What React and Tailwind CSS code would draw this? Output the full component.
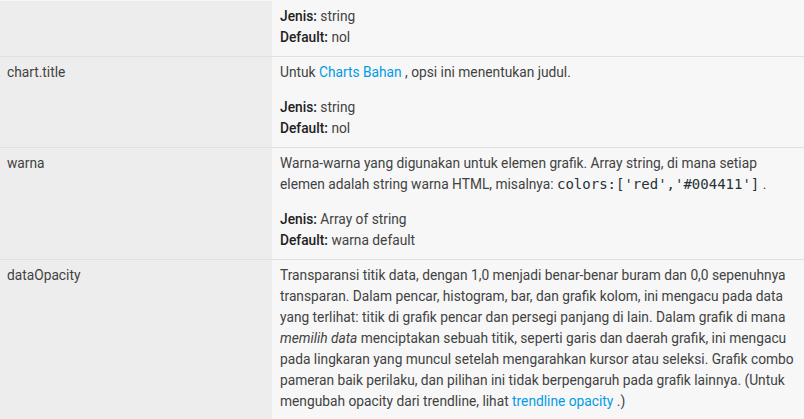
import React from "react";

const Link = ({ children }) => (
  <a className="text-[#039be5] no-underline">{children}</a>
);

const Code = ({ children }) => (
  <code className="font-['DejaVu_Sans_Mono',monospace] text-[14px] text-[#263238]">
    {children}
  </code>
);

const Meta = ({ type, def }) => (
  <p>
    <span className="font-medium text-[#212121]">Jenis:</span> {type}
    <br />
    <span className="font-medium text-[#212121]">Default:</span> {def}
  </p>
);

const rows = [
  {
    name: "",
    desc: null,
    type: "string",
    def: "nol",
  },
  {
    name: "chart.title",
    desc: (
      <>
        Untuk <Link>Charts Bahan</Link> , opsi ini menentukan judul.
      </>
    ),
    type: "string",
    def: "nol",
  },
  {
    name: "warna",
    desc: (
      <>
        Warna-warna yang digunakan untuk elemen grafik. Array string, di mana
        setiap elemen adalah string warna HTML, misalnya:{" "}
        <Code>colors:['red','#004411']</Code> .
      </>
    ),
    type: "Array of string",
    def: "warna default",
  },
  {
    name: "dataOpacity",
    desc: (
      <>
        Transparansi titik data, dengan 1,0 menjadi benar-benar buram dan 0,0
        sepenuhnya transparan. Dalam pencar, histogram, bar, dan grafik kolom,
        ini mengacu pada data yang terlihat: titik di grafik pencar dan persegi
        panjang di lain. Dalam grafik di mana <em>memilih data</em> menciptakan
        sebuah titik, seperti garis dan daerah grafik, ini mengacu pada
        lingkaran yang muncul setelah mengarahkan kursor atau seleksi. Grafik
        combo pameran baik perilaku, dan pilihan ini tidak berpengaruh pada
        grafik lainnya. (Untuk mengubah opacity dari trendline, lihat{" "}
        <Link>trendline opacity</Link> .)
      </>
    ),
    last: true,
  },
];

export default function App() {
  return (
    <div className="w-[804px] h-[419px] overflow-hidden bg-[#f7f7f7] font-['Roboto',sans-serif] text-[13.75px] leading-[21px] text-[#424242]">
      <div className="mt-[1px]">
        {rows.map((r, i) => (
          <div
            key={i}
            className={`flex ${r.last ? "" : "border-b border-[#e0e0e0]"}`}
          >
            <div className="w-[272px] shrink-0 bg-[#ededed] pl-[7px] pr-2 pt-[5px] pb-[8px]">
              {r.name}
            </div>
            <div className="flex-1 pl-2 pr-[2px] pt-[5px] pb-[8px]">
              {r.desc && <p className="mb-[14px]">{r.desc}</p>}
              {r.type && <Meta type={r.type} def={r.def} />}
            </div>
          </div>
        ))}
      </div>
    </div>
  );
}
